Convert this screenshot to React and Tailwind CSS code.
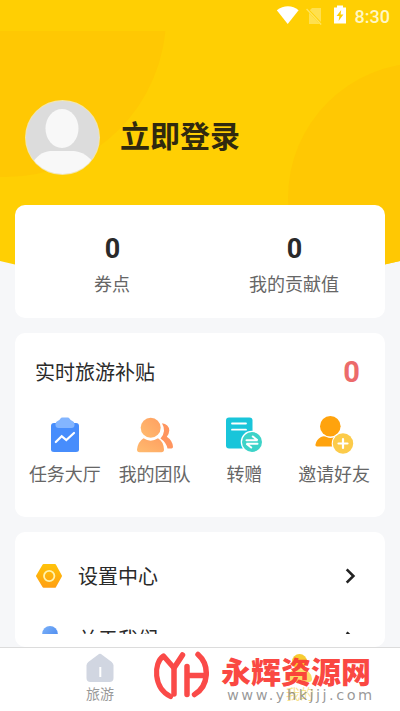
import React from 'react';

const WifiIcon = () => (
    <svg width="24" height="19" viewBox="0 0 24 19">
        <path d="M0.8 4.2 C7.5 -1.2 16.5 -1.2 22.6 4.2 L11.7 18 Z" fill="#fff" />
    </svg>
);

const NoSimIcon = () => (
    <svg width="17" height="18" viewBox="0 0 17 18">
        <path d="M6 1 H15 V17 H3 V4 Z" fill="#ffe04f" />
        <path d="M0.6 1.6 L15.6 17.4" stroke="#ffcf00" strokeWidth="2.4" />
        <path d="M0.6 2 L15.2 17.6" stroke="#ffe45c" strokeWidth="1.4" />
    </svg>
);

const BatteryIcon = () => (
    <svg width="12" height="19" viewBox="0 0 12 19">
        <path d="M3 0.5 H9 V2.5 H12 V18.5 H0 V2.5 H3 Z" fill="#fff" />
        <path d="M7.2 5 L2.6 11 H5.4 L4.6 16 L9.4 9.6 H6.6 Z" fill="#ffcf00" />
    </svg>
);

const Avatar = () => (
    <svg width="76" height="76" viewBox="0 0 76 76">
        <defs>
            <clipPath id="avatarClip">
                <circle cx="37.5" cy="37.5" r="36.6" />
            </clipPath>
        </defs>
        <circle cx="37.5" cy="37.5" r="37.5" fill="#f5e7a8" />
        <circle cx="37.5" cy="37.5" r="36.6" fill="#dcdcdc" />
        <g clipPath="url(#avatarClip)" fill="#f8f8f8">
            <ellipse cx="37" cy="28.5" rx="16.5" ry="19.5" />
            <path d="M8 62 C14 53.5 20 51 28 51 H46 C54 51 61 53.5 68 62 V76 H8 Z" />
        </g>
    </svg>
);

const TaskIcon = () => (
    <svg width="40" height="40" viewBox="0 0 40 40">
        <path d="M9 8 H31 Q34 8 34 11 V34.5 Q34 37 31 37 H9 Q6 37 6 34.5 V11 Q6 8 9 8 Z" fill="#478dfc" />
        <path d="M10.5 9 Q10.5 6.5 13 5.8 Q14.5 5.3 15.3 3.8 Q16 2.5 17.5 2.5 H22.5 Q24 2.5 24.7 3.8 Q25.5 5.3 27 5.8 Q29.5 6.5 29.5 9 V10 Q29.5 13 26.5 13 H13.5 Q10.5 13 10.5 10 Z" fill="#83b5ff" />
        <path d="M10.8 27 L16.7 21.2 L21.3 25 L29 18" fill="none" stroke="#fff" strokeWidth="2.2" strokeLinecap="round" strokeLinejoin="miter" />
    </svg>
);

const TeamIcon = () => (
    <svg width="40" height="40" viewBox="0 0 40 40">
        <defs>
            <linearGradient id="teamFill" x1="0" y1="1" x2="1" y2="0">
                <stop offset="0" stopColor="#ffbc70" />
                <stop offset="1" stopColor="#ff9f60" />
            </linearGradient>
        </defs>
        <path d="M27 8.3 Q33.8 9 34.3 15.5 Q34 19.3 31.8 21.8 Q37.5 25.5 38 31.8 Q38 33.5 36.5 33.5 H32.5 Q31.3 27.5 25.5 23.5 Q31.8 16.5 27 8.3 Z" fill="#ff955f" />
        <circle cx="15.7" cy="12.7" r="10" fill="url(#teamFill)" />
        <path d="M8.5 23.3 Q15.7 28.2 23 23.3 Q28.5 26.5 29 34.5 Q29 37.3 26.5 37.3 H4.5 Q2 37.3 2 34.5 Q2.8 27 8.5 23.3 Z" fill="url(#teamFill)" />
    </svg>
);

const TransferIcon = () => (
    <svg width="40" height="40" viewBox="0 0 40 40">
        <rect x="2" y="2.5" width="26.5" height="31" rx="3" fill="#19c5da" />
        <path d="M8 8.5 H22 M8 14.7 H22" stroke="#fff" strokeWidth="1.8" strokeLinecap="round" />
        <circle cx="28" cy="27" r="11.3" fill="#fff" />
        <circle cx="28" cy="27" r="10" fill="#3dd3c8" />
        <path d="M22.5 25.3 H33.5 L28.8 21.5 M33.5 28.7 H22.5 L27.2 32.5" fill="none" stroke="#fff" strokeWidth="2" strokeLinejoin="bevel" strokeLinecap="round" />
    </svg>
);

const InviteIcon = () => (
    <svg width="40" height="40" viewBox="0 0 40 40">
        <circle cx="16.3" cy="11.3" r="10.3" fill="#ffa30d" />
        <path d="M7 22 Q10 20.5 12.5 22 Q16.5 24 20.5 22 Q23 21 25 22 V31.5 H3 Q1.2 31.5 1.4 29.8 Q2.3 24.5 7 22 Z" fill="#ffa30d" />
        <circle cx="29" cy="28.5" r="11.3" fill="#fff" />
        <circle cx="29" cy="28.5" r="10.2" fill="#fccb4a" />
        <path d="M29 24 V33 M24.5 28.5 H33.5" stroke="#fff" strokeWidth="2.2" strokeLinecap="round" />
    </svg>
);

const SettingsIcon = () => (
    <svg width="28" height="26" viewBox="0 0 28 26">
        <defs>
            <linearGradient id="hexFill" x1="0" y1="0" x2="0" y2="1">
                <stop offset="0" stopColor="#ffc20a" />
                <stop offset="1" stopColor="#ffa011" />
            </linearGradient>
        </defs>
        <path d="M8.5 2 H20 L26 13 L20 23.7 H8.5 L2 13 Z" fill="url(#hexFill)" stroke="url(#hexFill)" strokeWidth="2" strokeLinejoin="round" />
        <circle cx="14.2" cy="13" r="5.2" fill="none" stroke="#fff3ad" strokeWidth="1.8" />
    </svg>
);

const AboutIcon = () => (
    <svg width="28" height="26" viewBox="0 0 28 26">
        <defs>
            <linearGradient id="aboutFill" x1="0" y1="0" x2="1" y2="1">
                <stop offset="0" stopColor="#7db2f8" />
                <stop offset="1" stopColor="#4484ee" />
            </linearGradient>
        </defs>
        <circle cx="15" cy="7.8" r="7.8" fill="url(#aboutFill)" />
        <path d="M2 26 Q3 18 15 18 Q26 18 27 26 Z" fill="url(#aboutFill)" />
    </svg>
);

const Chevron = () => (
    <svg width="12" height="18" viewBox="0 0 12 18">
        <path d="M1.7 2.3 L8.4 9 L1.7 15.7" fill="none" stroke="#222" strokeWidth="2.6" />
    </svg>
);

const HomeIcon = () => (
    <svg width="28" height="30" viewBox="0 0 28 30">
        <path d="M13 1 Q14 0.3 15 1 L25.7 9 Q27.5 10.5 27.5 12.5 V25 Q27.5 29 23.5 29 H4.5 Q0.5 29 0.5 25 V12.5 Q0.5 10.5 2.3 9 Z" fill="#d1d6e1" />
        <path d="M14.3 14 V24" stroke="#fff" strokeWidth="2" />
    </svg>
);

const MineIcon = () => (
    <svg width="28" height="30" viewBox="0 0 28 30">
        <circle cx="13.5" cy="8.5" r="7.5" fill="#f6cc31" />
        <path d="M1.5 26 Q2 16 13.5 16 Q25 16 26 26 Q26 29 23 29 H4.5 Q1.5 29 1.5 26 Z" fill="#fbdc68" />
    </svg>
);

const BrandLogo = () => (
    <svg width="58" height="50" viewBox="0 0 58 50">
        <g fill="none" stroke="#fa4a48" strokeWidth="5.2" strokeLinecap="round" strokeLinejoin="round">
            <path d="M17.5 45.5 C0.5 37 0 12 10.5 5 L21 17" />
            <path d="M29.5 4 L21 17 V43" strokeWidth="5.5" />
            <path d="M34 43.5 V15.5 M34 24.5 H52" strokeWidth="5.5" />
            <path d="M45 3.5 C57 14 56 35 41.5 43.5" strokeWidth="5.5" />
        </g>
    </svg>
);

const stats = [
    { label: '券点', value: 0 },
    { label: '我的贡献值', value: 0 },
];

const actions = [
    { label: '任务大厅', Icon: TaskIcon },
    { label: '我的团队', Icon: TeamIcon },
    { label: '转赠', Icon: TransferIcon },
    { label: '邀请好友', Icon: InviteIcon },
];

const menu = [
    { label: '设置中心', Icon: SettingsIcon },
    { label: '关于我们', Icon: AboutIcon },
];

const HeaderBackground = () => (
    <svg className="absolute left-0 top-0" width="400" height="290" viewBox="0 0 400 290">
        <defs>
            <clipPath id="headerClip">
                <path d="M0 31 H400 V261 Q200 311 0 261 Z" />
            </clipPath>
        </defs>
        <path d="M0 0 H400 V261 Q200 311 0 261 Z" fill="#ffcf03" />
        <g clipPath="url(#headerClip)" fill="#ffc803">
            <circle cx="5" cy="16" r="161" />
            <circle cx="423" cy="198" r="135" />
        </g>
    </svg>
);

const StatusBar = () => (
    <div className="flex h-[31px] items-center justify-end pr-[10px]">
        <WifiIcon />
        <span className="ml-[6px] mt-px"><NoSimIcon /></span>
        <span className="ml-[11px] -mt-[2px]"><BatteryIcon /></span>
        <span className="ml-[9px] mt-[3px] font-['Roboto'] text-[18px] font-medium leading-5 text-[#fff7c4]">8:30</span>
    </div>
);

const App = () => {
    return (
        <div className="relative flex h-[711px] w-[400px] flex-col overflow-hidden bg-[#f6f7f9] font-['Noto_Sans_CJK_SC',sans-serif] text-[#2a2a2a]">
            <HeaderBackground />
            <div className="relative flex min-h-0 flex-1 flex-col">
                <StatusBar />
                <div className="flex h-[174px] items-start pl-[25px] pt-[69px]">
                    <Avatar />
                    <h1 className="ml-[19px] mt-[14px] text-[30px] font-bold leading-10 text-[#30290f]">立即登录</h1>
                </div>

                <div className="mx-[15px] grid h-[113px] shrink-0 grid-cols-2 rounded-[10px] bg-white pl-[6px] pt-[28px] text-center">
                    {stats.map(({ label, value }) => (
                        <div key={label}>
                            <p className="pl-px font-['Roboto'] text-[27px] font-bold leading-8">{value}</p>
                            <p className="mt-[4px] text-[18px] leading-7 text-[#666]">{label}</p>
                        </div>
                    ))}
                </div>

                <div className="mx-[15px] mt-[15px] h-[184px] shrink-0 rounded-[10px] bg-white pt-[19px]">
                    <div className="flex h-10 items-center justify-between pl-5 pr-[25px]">
                        <p className="text-[20px] leading-10">实时旅游补贴</p>
                        <p className="font-['Roboto'] text-[29px] font-bold leading-10 text-[#ec6b6b]">0</p>
                    </div>
                    <div className="mt-[23px] grid grid-cols-4 pl-[5px] pr-[6px]">
                        {actions.map(({ label, Icon }) => (
                            <div key={label} className="flex flex-col items-center">
                                <Icon />
                                <p className="mt-[4px] whitespace-nowrap text-[18px] leading-7 text-[#666]">{label}</p>
                            </div>
                        ))}
                    </div>
                </div>

                <div className="mx-[15px] mt-[15px] h-[115px] shrink-0 rounded-[10px] bg-white pb-[13px]">
                    <div className="h-full overflow-hidden pt-[14px]">
                        {menu.map(({ label, Icon }) => (
                            <div key={label} className="flex h-[63px] items-start pl-5 pr-[28px] pt-[17px]">
                                <Icon />
                                <p className="ml-[15px] -mt-px flex-1 text-[20px] leading-7">{label}</p>
                                <span className="mt-[4px]"><Chevron /></span>
                            </div>
                        ))}
                    </div>
                </div>
            </div>

            <nav className="relative grid h-16 shrink-0 grid-cols-2 border-t border-[#dcdcdc] bg-white text-[14px] leading-5">
                <div className="flex flex-col items-center pt-[5px] text-[#999]">
                    <HomeIcon />
                    <span>旅游</span>
                </div>
                <div className="flex flex-col items-center pt-[5px] text-[#f8e28c]">
                    <MineIcon />
                    <span>我的</span>
                </div>
            </nav>

            <div className="absolute left-[153px] top-[651px] flex">
                <BrandLogo />
                <div className="ml-[10px]">
                    <p className="text-[30px] font-black leading-[38px] text-[#fa3c36]/95">永辉资源网</p>
                    <p className="ml-[6px] -mt-[4px] font-['DejaVu_Sans'] text-[14.5px] leading-5 tracking-[2.5px] text-[#777]/75">www.yhkjjj.com</p>
                </div>
            </div>
        </div>
    );
};

export default App;
